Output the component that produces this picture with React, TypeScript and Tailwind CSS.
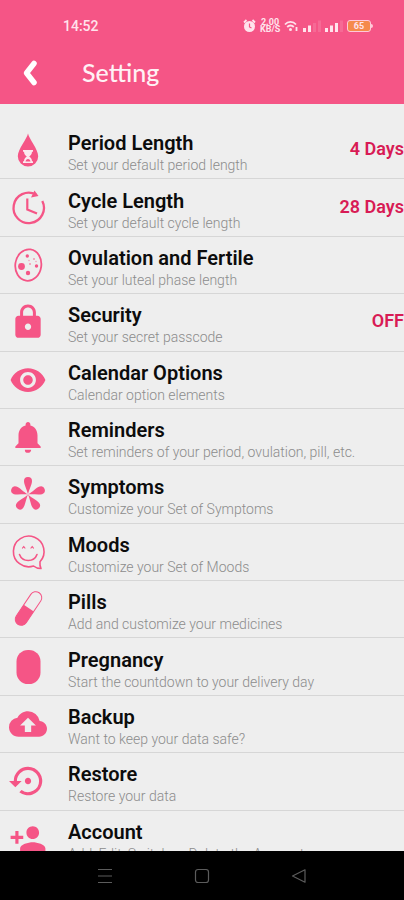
import React from 'react'
import {
    MdBackup,
    MdLock,
    MdNotifications,
    MdPersonAdd,
    MdSettingsBackupRestore,
    MdVisibility,
} from 'react-icons/md'

type Setting = {
    title: string
    text: string
    icon: React.ReactNode
    value?: string
}

const DropIcon = () => (
    <svg width='40' height='40' viewBox='0 0 40 40'>
        <path d='M20 3.500C21 9 30.200 19 30.200 26.300a10.200 10.200 0 0 1-20.400 0C9.800 19 19 9 20 3.500z' fill='currentColor' />
        <path d='M15 20h10v1.800h-1c0 2.600-1.600 3.700-2.800 4.700 1.200 1 2.800 2.200 2.800 4.700h1V33H15v-1.800h1c0-2.500 1.600-3.700 2.800-4.700-1.200-1-2.800-2.100-2.800-4.700h-1z' fill='#fbe9ee' />
        <path d='M17.500 31.500c.5-1.800 1.500-2.500 2.500-2.500s2 .7 2.500 2.500z' fill='currentColor' />
    </svg>
)

const ClockIcon = () => (
    <svg width='40' height='40' viewBox='0 0 40 40' fill='none' stroke='currentColor'>
        <path d='M34.300 13A15.200 15.200 0 1 1 28 6.500' strokeWidth='2.300' />
        <path d='M19.300 10.500v11l9.700 4' strokeWidth='2.200' />
        <path d='M26.500 2.500l4 5.500-7.500 1.500z' fill='currentColor' stroke='none' />
    </svg>
)

const CellIcon = () => (
    <svg width='40' height='40' viewBox='0 0 40 40' fill='currentColor'>
        <ellipse cx='20.300' cy='20' rx='13' ry='15.800' transform='rotate(8 20 20)' fill='none' stroke='currentColor' strokeWidth='1.800' />
        <circle cx='13.500' cy='21.500' r='3.400' />
        <circle cx='20' cy='28' r='2.200' />
        <circle cx='19.300' cy='11' r='1.700' />
        <circle cx='28.500' cy='21' r='1.700' />
        <circle cx='22' cy='19' r='1' opacity='.6' />
        <circle cx='26' cy='14' r='1' opacity='.6' />
        <circle cx='21' cy='15.500' r='.7' opacity='.6' />
        <circle cx='28' cy='16.500' r='.7' opacity='.6' />
    </svg>
)

const SymptomIcon = () => (
    <svg width='40' height='40' viewBox='0 0 40 40' fill='currentColor'>
        {[0, 72, 144, 216, 288].map((angle) => (
            <path
                key={angle}
                d='M20 20.500C19 15.500 16 10.500 16 7a4 4 0 0 1 8 0C24 10.500 21 15.500 20 20.500z'
                transform={`rotate(${angle} 20 20.500)`}
            />
        ))}
    </svg>
)

const MoodIcon = () => (
    <svg width='40' height='40' viewBox='0 0 40 40' fill='none' stroke='currentColor' strokeWidth='1.600' strokeLinecap='round' strokeLinejoin='round'>
        <path d='M25.500 34A15.300 15.300 0 1 1 32 29.800C31.700 32.500 32 34.500 33 36.500c-3 0-5.500-.8-7.500-2.500z' />
        <path d='M11.500 22.500c3 8 14.500 8 17.500 0' />
        <path d='M14.500 16l1.200-1.500 1.200 1.500M23 16l1.200-1.500 1.200 1.500' strokeWidth='1.200' />
    </svg>
)

const PillIcon = () => (
    <svg width='40' height='40' viewBox='0 0 40 40'>
        <g transform='rotate(34 20.500 19.500)'>
            <rect x='14.500' y='.5' width='12' height='38' rx='6' fill='none' stroke='currentColor' />
            <path d='M14.500 19h12v13.500a6 6 0 0 1-12 0z' fill='currentColor' />
        </g>
    </svg>
)

const PregnancyIcon = () => (
    <svg width='40' height='40' viewBox='0 0 40 40'>
        <rect x='8.500' y='3' width='24' height='34' rx='11.500' fill='currentColor' />
    </svg>
)

const settings: Setting[] = [
    { title: 'Period Length', text: 'Set your default period length', icon: <DropIcon />, value: '4 Days' },
    { title: 'Cycle Length', text: 'Set your default cycle length', icon: <ClockIcon />, value: '28 Days' },
    { title: 'Ovulation and Fertile', text: 'Set your luteal phase length', icon: <CellIcon /> },
    { title: 'Security', text: 'Set your secret passcode', icon: <MdLock size={38} />, value: 'OFF' },
    { title: 'Calendar Options', text: 'Calendar option elements', icon: <MdVisibility size={38} /> },
    { title: 'Reminders', text: 'Set reminders of your period, ovulation, pill, etc.', icon: <MdNotifications size={38} /> },
    { title: 'Symptoms', text: 'Customize your Set of Symptoms', icon: <SymptomIcon /> },
    { title: 'Moods', text: 'Customize your Set of Moods', icon: <MoodIcon /> },
    { title: 'Pills', text: 'Add and customize your medicines', icon: <PillIcon /> },
    { title: 'Pregnancy', text: 'Start the countdown to your delivery day', icon: <PregnancyIcon /> },
    { title: 'Backup', text: 'Want to keep your data safe?', icon: <MdBackup size={38} /> },
    { title: 'Restore', text: 'Restore your data', icon: <MdSettingsBackupRestore size={38} /> },
    { title: 'Account', text: 'Add, Edit, Switch or Delete the Account', icon: <MdPersonAdd size={38} /> },
]

const Signal = ({ bars }: { bars: number }) => (
    <svg width='18' height='12' viewBox='0 0 18 12' fill='#ffe3ec'>
        {[0, 1, 2, 3].map((i) => (
            <rect key={i} x={i * 5} y={8 - i * 2.5} width='3' height={4 + i * 2.5} opacity={i < bars ? 1 : 0.15} />
        ))}
    </svg>
)

const StatusBar = () => (
    <div className='flex h-[52px] items-center justify-between pl-[63px] pr-[31px] text-[#ffe3ec]'>
        <span className='text-sm font-medium'>14:52</span>
        <div className='flex items-center gap-1'>
            <svg width='13' height='14' viewBox='0 0 13 14'>
                <circle cx='6.500' cy='7.500' r='5.500' fill='currentColor' />
                <path d='M1 3.500L3.500 1M12 3.500L9.500 1' stroke='currentColor' strokeWidth='1.800' />
                <path d='M6.500 4.500v3.500l2 1' fill='none' stroke='#f55586' strokeWidth='1.200' />
            </svg>
            <span className='w-5 text-center text-[9px] font-bold leading-[7px]'>2.00 KB/S</span>
            <svg width='15' height='12' viewBox='0 0 15 12' fill='none' stroke='currentColor' strokeWidth='1.800'>
                <path d='M1 4.500c3-3.500 8-3.500 11 0M3.200 7c2-2 4.600-2 6.600 0' />
                <circle cx='6.500' cy='9.500' r='1.500' fill='currentColor' stroke='none' />
                <path d='M12.500 7v4' />
            </svg>
            <Signal bars={2} />
            <Signal bars={3} />
            <div className='flex items-center'>
                <span className='flex h-3 w-6 items-center justify-center rounded-[3px] border border-[#ffc9d9] bg-[#f58a4b] text-[9px] font-bold leading-none'>
                    65
                </span>
                <span className='h-1 w-[2px] rounded-r bg-[#ffc9d9]' />
            </div>
        </div>
    </div>
)

const SettingRow = ({ title, text, icon, value }: Setting) => (
    <li className='flex border-b border-[#d6d6d6]'>
        <button type='button' className='flex w-full items-center text-left'>
            <span className='flex w-14 shrink-0 justify-center text-[#f55586]'>{icon}</span>
            <span className='flex flex-1 flex-col pb-[2px] pl-3 pt-[10px]'>
                <span className='text-xl font-semibold leading-[22px] text-[#0c0c0c]'>{title}</span>
                <span className='text-sm font-light leading-[22px] text-[#8c8c8c]'>{text}</span>
            </span>
            {value && <span className='pb-[2px] text-lg font-semibold text-[#d81b55]'>{value}</span>}
        </button>
    </li>
)

const App: React.FC = () => {
    return (
        <div className="flex h-screen flex-col bg-[#eeeeee] font-['Roboto',sans-serif]">
            <header className='bg-[#f55586]'>
                <StatusBar />
                <div className='flex h-[52px] items-center pb-[10px]'>
                    <button type='button' aria-label='Back' className='ml-[18px] mr-10'>
                        <svg width='24' height='28' viewBox='0 0 24 28' fill='none' stroke='white' strokeWidth='5.500' strokeLinecap='round' strokeLinejoin='round'>
                            <path d='M16 4.500L8.500 14l7.500 9.500' />
                        </svg>
                    </button>
                    <h1 className="font-['Lato',sans-serif] text-[25px] font-medium text-[#fff1f5]">Setting</h1>
                </div>
            </header>

            <main className='min-h-0 flex-1 overflow-hidden pt-[18px]'>
                <ul className='grid min-h-[746px] auto-rows-fr'>
                    {settings.map((setting) => (
                        <SettingRow key={setting.title} {...setting} />
                    ))}
                </ul>
            </main>

            <nav className='flex h-[49px] shrink-0 justify-center bg-black text-[#5c5c5c]'>
                <div className='grid w-[72%] grid-cols-3'>
                    <button type='button' aria-label='Recent apps' className='flex items-center justify-center'>
                        <svg width='16' height='16' viewBox='0 0 16 16' stroke='currentColor' strokeWidth='1.200'>
                            <path d='M1 1.500h14M1 8h14M1 14.500h14' />
                        </svg>
                    </button>
                    <button type='button' aria-label='Home' className='flex items-center justify-center'>
                        <svg width='16' height='16' viewBox='0 0 16 16' fill='none' stroke='currentColor' strokeWidth='1.200'>
                            <rect x='1.500' y='1.500' width='13' height='13' rx='2.500' />
                        </svg>
                    </button>
                    <button type='button' aria-label='Back' className='flex items-center justify-center'>
                        <svg width='16' height='16' viewBox='0 0 16 16' fill='none' stroke='currentColor' strokeWidth='1.200' strokeLinejoin='round'>
                            <path d='M14 1.800v12.400L1.500 8z' />
                        </svg>
                    </button>
                </div>
            </nav>
        </div>
    )
}

export default App
